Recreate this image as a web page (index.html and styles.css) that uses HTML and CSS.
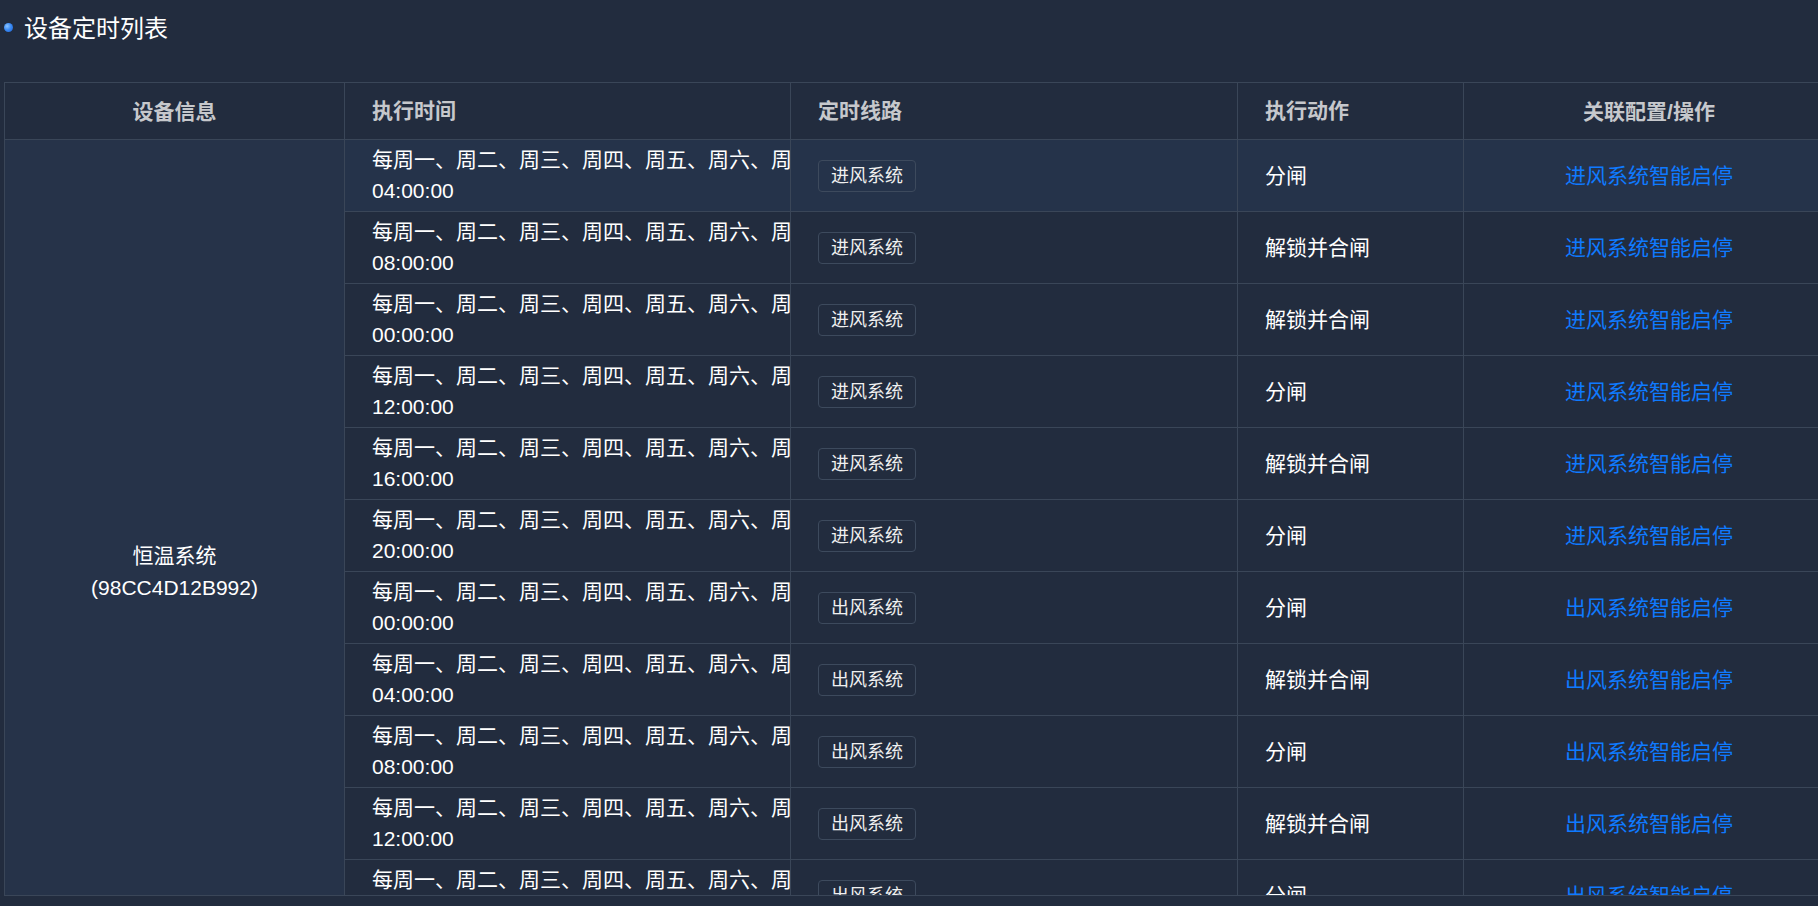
FILE: index.html
```html
<!DOCTYPE html>
<html lang="zh-CN">
<head>
<meta charset="utf-8">
<title>设备定时列表</title>
<link rel="stylesheet" href="styles.css">
</head>
<body>
<div class="page">
  <div class="title"><span class="dot"></span><span class="title-text">设备定时列表</span></div>
  <div class="table-wrap">
    <div class="grid">
      <div class="cell th center">设备信息</div>
      <div class="cell th">执行时间</div>
      <div class="cell th">定时线路</div>
      <div class="cell th">执行动作</div>
      <div class="cell th center">关联配置/操作</div>

      <div class="cell device"><div>恒温系统</div><div>(98CC4D12B992)</div></div>

      <div class="cell time hl"><div class="days">每周一、周二、周三、周四、周五、周六、周日</div><div>04:00:00</div></div>
      <div class="cell hl"><span class="tag">进风系统</span></div>
      <div class="cell hl">分闸</div>
      <div class="cell center hl"><a class="link">进风系统智能启停</a></div>

      <div class="cell time"><div class="days">每周一、周二、周三、周四、周五、周六、周日</div><div>08:00:00</div></div>
      <div class="cell"><span class="tag">进风系统</span></div>
      <div class="cell">解锁并合闸</div>
      <div class="cell center"><a class="link">进风系统智能启停</a></div>

      <div class="cell time"><div class="days">每周一、周二、周三、周四、周五、周六、周日</div><div>00:00:00</div></div>
      <div class="cell"><span class="tag">进风系统</span></div>
      <div class="cell">解锁并合闸</div>
      <div class="cell center"><a class="link">进风系统智能启停</a></div>

      <div class="cell time"><div class="days">每周一、周二、周三、周四、周五、周六、周日</div><div>12:00:00</div></div>
      <div class="cell"><span class="tag">进风系统</span></div>
      <div class="cell">分闸</div>
      <div class="cell center"><a class="link">进风系统智能启停</a></div>

      <div class="cell time"><div class="days">每周一、周二、周三、周四、周五、周六、周日</div><div>16:00:00</div></div>
      <div class="cell"><span class="tag">进风系统</span></div>
      <div class="cell">解锁并合闸</div>
      <div class="cell center"><a class="link">进风系统智能启停</a></div>

      <div class="cell time"><div class="days">每周一、周二、周三、周四、周五、周六、周日</div><div>20:00:00</div></div>
      <div class="cell"><span class="tag">进风系统</span></div>
      <div class="cell">分闸</div>
      <div class="cell center"><a class="link">进风系统智能启停</a></div>

      <div class="cell time"><div class="days">每周一、周二、周三、周四、周五、周六、周日</div><div>00:00:00</div></div>
      <div class="cell"><span class="tag">出风系统</span></div>
      <div class="cell">分闸</div>
      <div class="cell center"><a class="link">出风系统智能启停</a></div>

      <div class="cell time"><div class="days">每周一、周二、周三、周四、周五、周六、周日</div><div>04:00:00</div></div>
      <div class="cell"><span class="tag">出风系统</span></div>
      <div class="cell">解锁并合闸</div>
      <div class="cell center"><a class="link">出风系统智能启停</a></div>

      <div class="cell time"><div class="days">每周一、周二、周三、周四、周五、周六、周日</div><div>08:00:00</div></div>
      <div class="cell"><span class="tag">出风系统</span></div>
      <div class="cell">分闸</div>
      <div class="cell center"><a class="link">出风系统智能启停</a></div>

      <div class="cell time"><div class="days">每周一、周二、周三、周四、周五、周六、周日</div><div>12:00:00</div></div>
      <div class="cell"><span class="tag">出风系统</span></div>
      <div class="cell">解锁并合闸</div>
      <div class="cell center"><a class="link">出风系统智能启停</a></div>

      <div class="cell time"><div class="days">每周一、周二、周三、周四、周五、周六、周日</div><div>16:00:00</div></div>
      <div class="cell"><span class="tag">出风系统</span></div>
      <div class="cell">分闸</div>
      <div class="cell center"><a class="link">出风系统智能启停</a></div>

      <div class="cell time"><div class="days">每周一、周二、周三、周四、周五、周六、周日</div><div>20:00:00</div></div>
      <div class="cell"><span class="tag">出风系统</span></div>
      <div class="cell">解锁并合闸</div>
      <div class="cell center"><a class="link">出风系统智能启停</a></div>
    </div>
  </div>
</div>
</body>
</html>
```

FILE: styles.css
```css
html, body {
  margin: 0;
  padding: 0;
  height: 100%;
}

body {
  background: #222c3e;
  color: #ffffff;
  font-family: "Liberation Sans", "Noto Sans CJK SC", sans-serif;
  overflow: hidden;
}

.page {
  padding-left: 4px;
}

.title {
  height: 52px;
  margin-bottom: 30px;
  display: flex;
  align-items: center;
  gap: 11px;
  font-size: 24px;
  color: #ffffff;
}

.dot {
  width: 9px;
  height: 9px;
  margin-top: 3px;
  border-radius: 50%;
  background: radial-gradient(circle at 35% 35%, #8cc4ff 0%, #3b8cf5 45%, #1c5fd0 100%);
  flex: none;
}

.table-wrap {
  width: 1832px;
  height: 814px;
  box-sizing: border-box;
  border: 1px solid #3a4658;
  overflow: hidden;
}

.grid {
  display: grid;
  grid-template-columns: 340px 446px 447px 226px 371px;
  grid-template-rows: 57px repeat(12, 72px);
}

.cell {
  box-sizing: border-box;
  border-right: 1px solid #3a4658;
  border-bottom: 1px solid #3a4658;
  display: flex;
  align-items: center;
  padding: 0 0 0 27px;
  font-size: 21px;
  line-height: 31px;
  color: #ffffff;
  overflow: hidden;
  min-width: 0;
}

.cell.center {
  justify-content: center;
  padding: 0;
}

.th {
  font-weight: 700;
  color: #c6c8cc;
  padding-bottom: 2px;
}

.device {
  grid-row: span 12;
  flex-direction: column;
  justify-content: center;
  align-items: center;
  padding: 0;
  line-height: 32px;
  background: #263349;
}

.time {
  flex-direction: column;
  align-items: flex-start;
  justify-content: center;
  padding-bottom: 2px;
}

.days {
  white-space: nowrap;
}

.hl {
  background: #25334a;
}

.tag {
  display: inline-block;
  box-sizing: border-box;
  height: 32px;
  padding: 0 12px;
  border: 1px solid #3d4a5d;
  border-radius: 4px;
  font-size: 18px;
  line-height: 30px;
  color: #f0f0f0;
}

.link {
  color: #0f7aff;
  cursor: pointer;
}
```
